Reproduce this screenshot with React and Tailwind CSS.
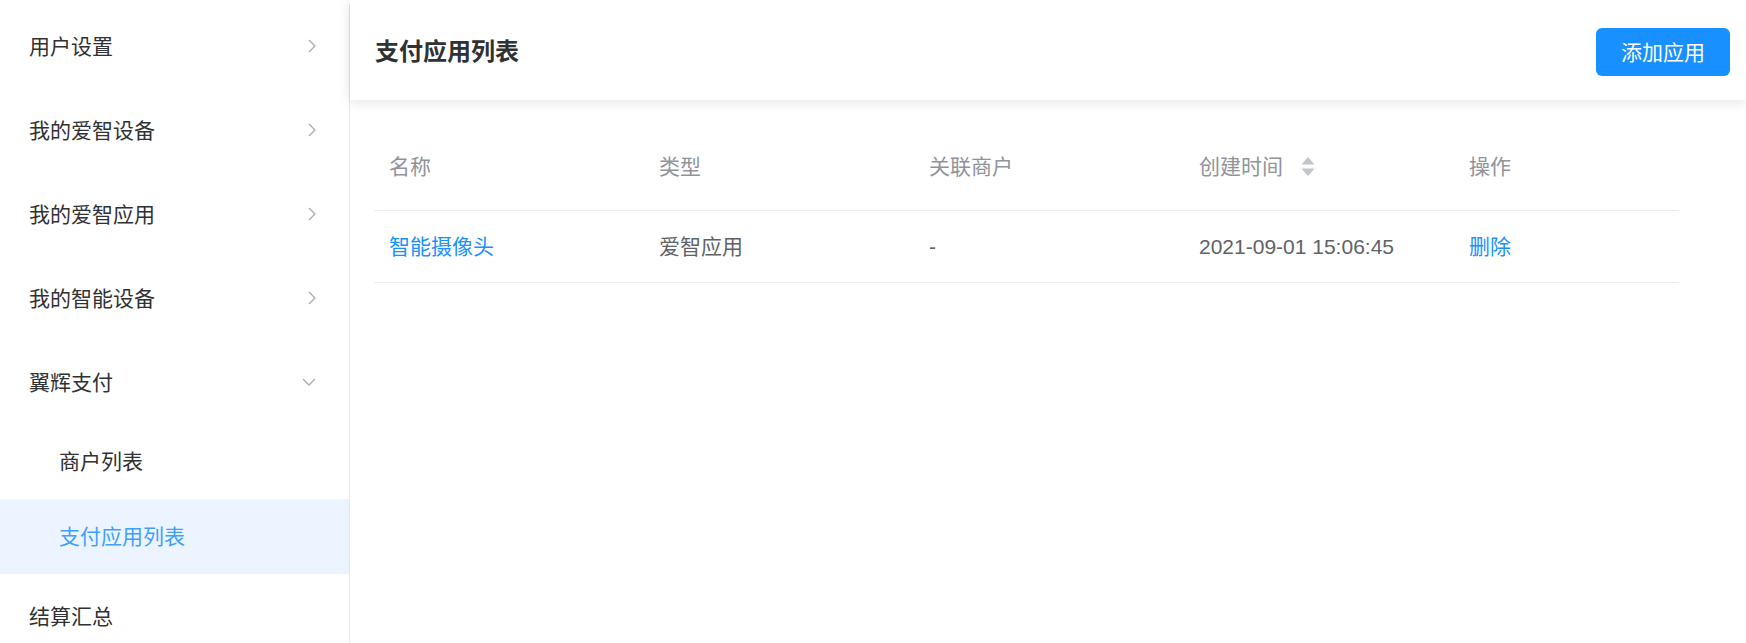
import React from "react";

const FONT = { fontFamily: '"Liberation Sans", "Noto Sans CJK SC", sans-serif' };

function ChevronRight() {
  return (
    <svg width="8" height="14" viewBox="0 0 8 14" fill="none">
      <path d="M1 1 L7 7 L1 13" stroke="#a8abb2" strokeWidth="1.3" />
    </svg>
  );
}

function ChevronDown() {
  return (
    <svg width="14" height="8" viewBox="0 0 14 8" fill="none">
      <path d="M1 1 L7 7 L13 1" stroke="#a8abb2" strokeWidth="1.3" />
    </svg>
  );
}

function SortIcon() {
  return (
    <svg width="14" height="19" viewBox="0 0 14 19">
      <path d="M7 0 L13.5 7.5 L0.5 7.5 Z" fill="#c0c4cc" />
      <path d="M0.5 11.5 L13.5 11.5 L7 19 Z" fill="#c0c4cc" />
    </svg>
  );
}

function MenuItem({ label, open }) {
  return (
    <div className="h-[84px] flex items-center justify-between pl-[29px] pr-[33px] text-[21px] text-[#303133] leading-none">
      <span>{label}</span>
      {open ? <ChevronDown /> : <ChevronRight />}
    </div>
  );
}

function SubItem({ label, active }) {
  return (
    <div
      className={
        "h-[75px] flex items-center pl-[59px] text-[21px] leading-none " +
        (active ? "bg-[#ecf5ff] text-[#409eff]" : "text-[#303133]")
      }
    >
      {label}
    </div>
  );
}

export default function App() {
  return (
    <div className="flex h-[643px] w-full overflow-hidden bg-white" style={FONT}>
      <aside className="w-[350px] shrink-0 pt-1">
        <div className="h-full border-r border-[#e6e6e6]">
          <MenuItem label="用户设置" />
          <MenuItem label="我的爱智设备" />
          <MenuItem label="我的爱智应用" />
          <MenuItem label="我的智能设备" />
          <MenuItem label="翼辉支付" open />
          <SubItem label="商户列表" />
          <SubItem label="支付应用列表" active />
          <div className="h-[84px] flex items-center pl-[29px] text-[21px] text-[#303133] leading-none">
            结算汇总
          </div>
        </div>
      </aside>

      <main className="flex-1 min-w-0">
        <header className="relative z-10 h-[100px] pt-1 flex items-center justify-between pl-[25px] pr-[16px] bg-white shadow-[0_2px_12px_0_rgba(0,0,0,0.12)]">
          <h1 className="text-[24px] font-bold text-[#303133] leading-none">支付应用列表</h1>
          <button className="w-[134px] h-[48px] rounded-[6px] bg-[#1890ff] text-white text-[21px] leading-none">
            添加应用
          </button>
        </header>

        <div className="mt-[39px] ml-[24px] w-[1305px]">
          <div className="grid grid-cols-[270px_270px_270px_270px_225px] h-[72px] pb-[16px] border-b border-[#ebeef5] text-[21px] text-[#909399] leading-none">
            <div className="flex items-center pl-[15px]">名称</div>
            <div className="flex items-center pl-[15px]">类型</div>
            <div className="flex items-center pl-[15px]">关联商户</div>
            <div className="flex items-center pl-[15px]">
              <span>创建时间</span>
              <span className="ml-[18px] flex items-center">
                <SortIcon />
              </span>
            </div>
            <div className="flex items-center pl-[15px]">操作</div>
          </div>
          <div className="grid grid-cols-[270px_270px_270px_270px_225px] h-[72px] border-b border-[#ebeef5] text-[21px] text-[#606266] leading-none">
            <div className="flex items-center pl-[15px] text-[#1890ff]">智能摄像头</div>
            <div className="flex items-center pl-[15px]">爱智应用</div>
            <div className="flex items-center pl-[15px]">-</div>
            <div className="flex items-center pl-[15px]">2021-09-01 15:06:45</div>
            <div className="flex items-center pl-[15px] text-[#1890ff]">删除</div>
          </div>
        </div>
      </main>
    </div>
  );
}
